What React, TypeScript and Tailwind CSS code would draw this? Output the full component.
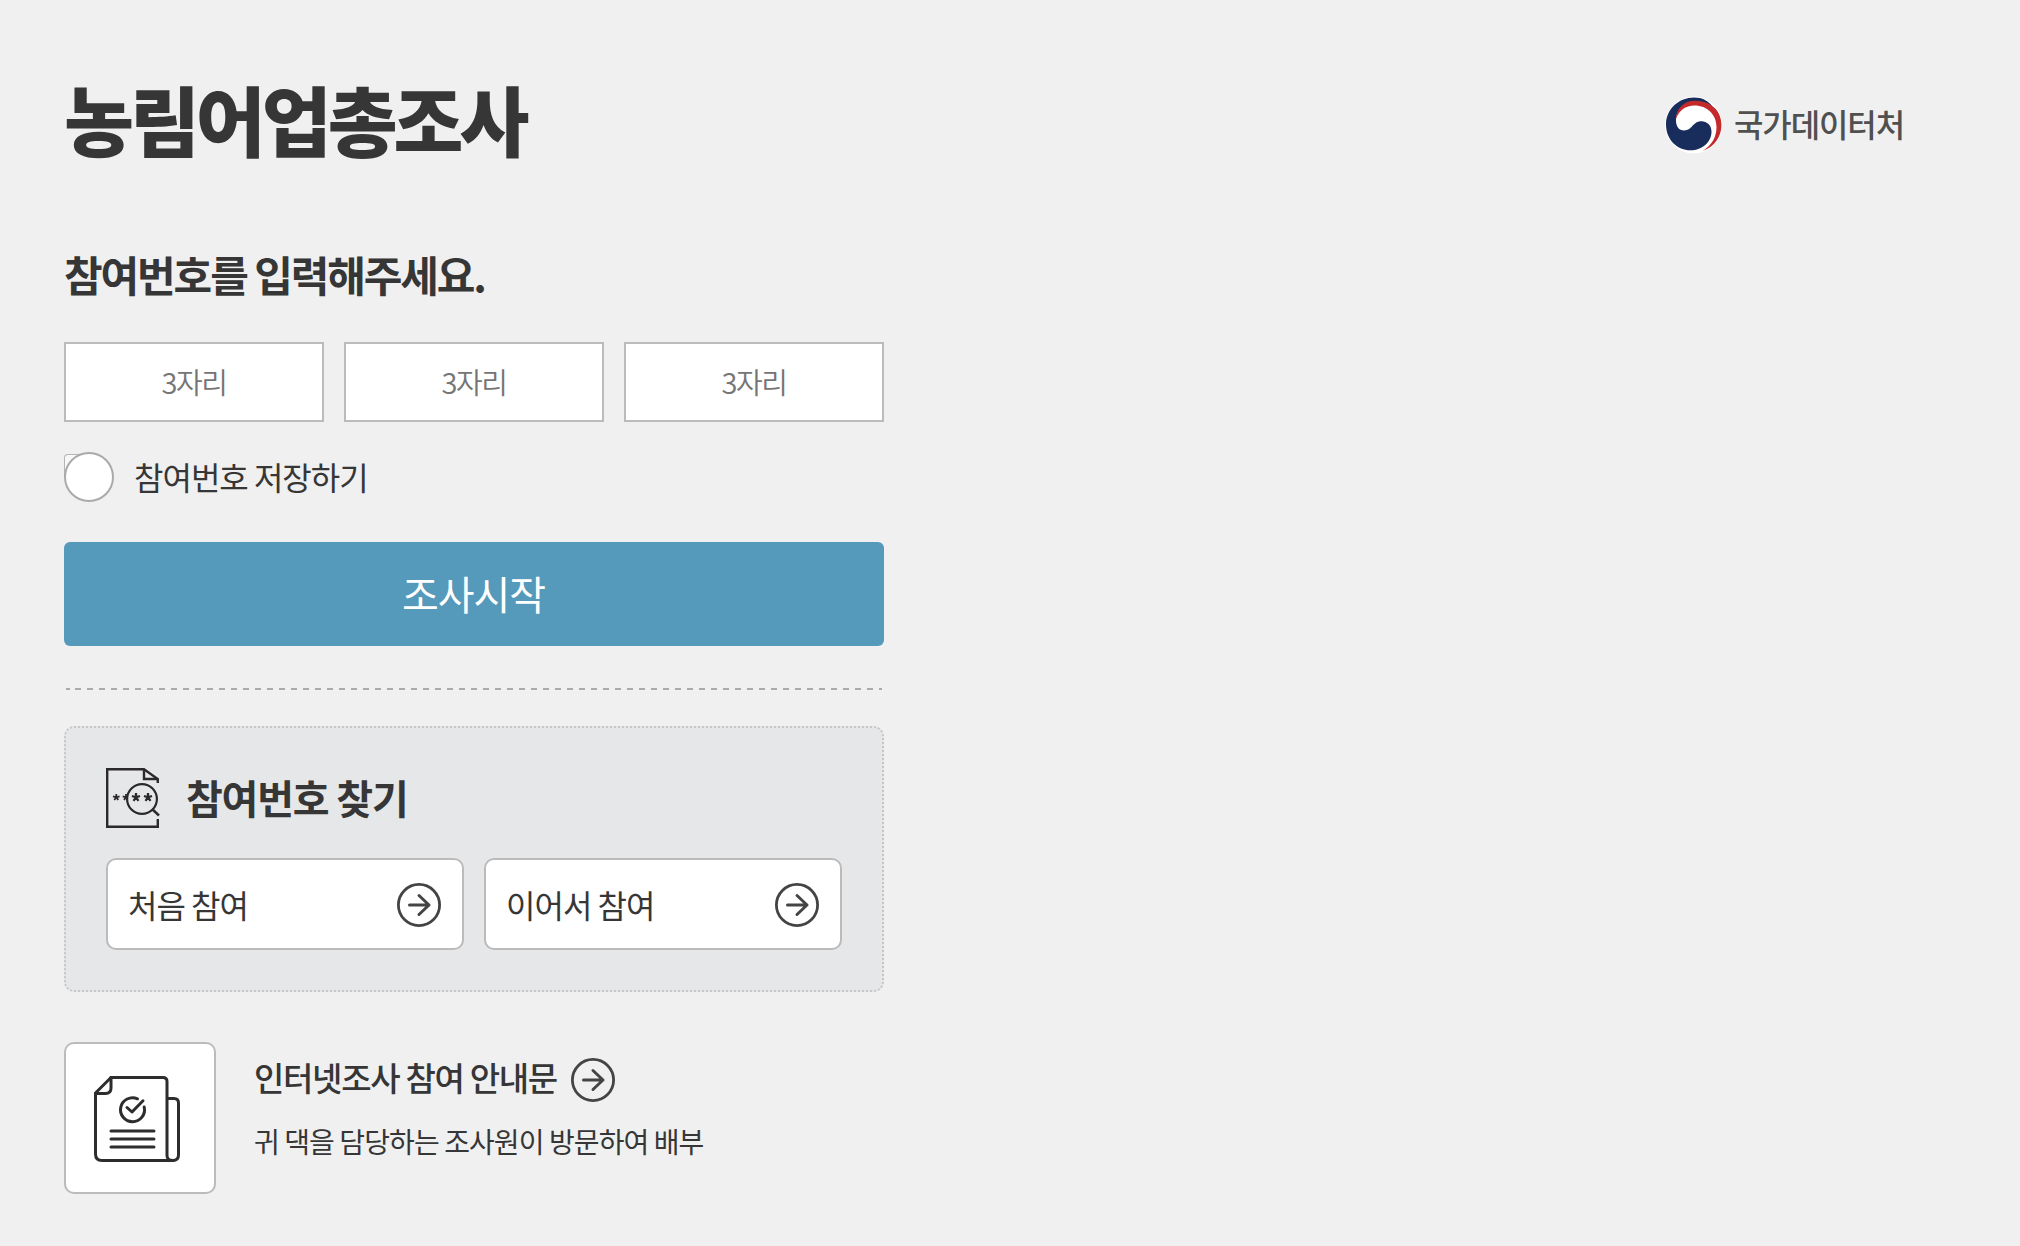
function ArrowCircle() {
  return (
    <svg className="h-11 w-11 shrink-0" viewBox="0 0 44 44" fill="none" stroke="#444444">
      <circle cx="22" cy="22" r="20.600" strokeWidth="2.800" />
      <path d="M12.500 22H32M22 12.500L32 22L22 31.500" strokeWidth="3" strokeLinecap="round" strokeLinejoin="round" />
    </svg>
  );
}

function GovernmentLogo() {
  return (
    <svg className="h-[58px] w-[58px] shrink-0" viewBox="0 0 58 58">
      <circle cx="28.500" cy="29" r="28.500" fill="#ffffff" />
      <path d="M35 2.100C18 -1.500 1 10.500 1 28.500C1 44 12.500 54.300 25.500 54.300C37.500 54.300 46.500 46 46.500 35.500C46.500 29.500 42 25.300 36.500 25.300C27 25.300 28 34.500 19 34.500C14 34.500 11 30.500 11 24.500C11 13 21 5.500 30 5.500C38 5.500 45 8 48 11C44.500 6.500 40 3.200 35 2.100Z" fill="#192d5c" />
      <path d="M29.500 4.800C19.500 4.800 11 12.500 11 23C14 14.500 20.500 9.500 29.500 9.500C42 9.500 51.500 18.500 51.500 31C51.500 41 47 49 38 54.800C49.500 50.500 56.400 41 56.400 29C56.400 21 53 14 47.500 10.300C43 7 37 4.800 29.500 4.800Z" fill="#c42a2b" />
    </svg>
  );
}

function SearchNumberIcon() {
  return (
    <svg className="h-[60px] w-[54px] shrink-0" viewBox="0 0 54 60" fill="none" stroke="#2b292a" strokeWidth="2.400">
      <path d="M51.800 15V11L38 1.200H1.200V58.800H51.800V51" />
      <path d="M38 1V11H52" />
      <circle cx="36" cy="31" r="14.900" strokeWidth="2.200" />
      <path d="M46 41L53 47.500" strokeWidth="2.400" />
      <path d="M10.300 26V29.300M7 28.300L10.300 29.300L13.600 28.300M10.300 29.300L8.300 32M10.300 29.300L12.300 32M20 26V29.300M16.700 28.300L20 29.300M20 29.300L18 32M20 29.300L21.500 31.500" strokeWidth="1.800" />
      <path d="M30 25V29.300M26 28L30 29.300L34 28M30 29.300L27.500 32.800M30 29.300L32.500 32.800M42 25V29.300M38 28L42 29.300L46 28M42 29.300L39.500 32.800M42 29.300L44.500 32.800" strokeWidth="2.300" />
    </svg>
  );
}

function GuideIcon() {
  return (
    <svg className="h-[86px] w-[86px]" viewBox="0 0 86 86" fill="none" stroke="#2d2d2d" strokeWidth="3" strokeLinecap="round" strokeLinejoin="round">
      <path d="M17 1.500H69Q73 1.500 73 5.500V79.500Q73 84.500 78.800 84.500Q84.500 84.500 84.500 79V27Q84.500 22.500 80 22.500H73" />
      <path d="M17 1.500L1.500 17V78Q1.500 84.500 8 84.500H79" />
      <path d="M17 1.500V12Q17 17.500 11.500 17.500H1.500" />
      <path d="M43.500 22.800A12 12 0 1 0 50.200 31" />
      <path d="M33 31.500L38 36L49 24.800M17 55H60M17 63H60M17 71H60" />
    </svg>
  );
}

const digitFields = ['first', 'second', 'third'];
const findLinks = ['처음 참여', '이어서 참여'];

export default function App() {
  return (
    <div className="min-h-[1246px] bg-[#f0f0f0] px-16 pt-[76px] font-['Noto_Sans_CJK_KR',sans-serif] text-[#363636]">
      <header className="flex h-24 items-center justify-between pr-[52px]">
        <h1 className="pb-3 text-[76px] leading-[96px] font-black tracking-[-4px] whitespace-nowrap">농림어업총조사</h1>
        <div className="flex items-center gap-[11px] pt-0.5">
          <GovernmentLogo />
          <span className="pb-1 text-[32px] leading-[48px] font-medium tracking-[-1.1px] whitespace-nowrap text-[#505050]">국가데이터처</span>
        </div>
      </header>

      <main className="w-[820px] pt-[70px]">
        <h2 className="h-16 text-[42px] leading-16 font-bold tracking-[-2.1px]">참여번호를 입력해주세요.</h2>
        <div className="mt-9 flex gap-5">
          {digitFields.map((name) => (
            <input
              key={name}
              name={name}
              type="text"
              maxLength={3}
              placeholder="3자리"
              className="h-20 w-[260px] border-2 border-[#bbbbbb] bg-white pb-0.5 text-center text-[29px] font-[350] tracking-[-1.4px] placeholder:text-[#757575]"
            />
          ))}
        </div>
        <label className="mt-[30px] flex h-[50px] items-center gap-5 text-[32px] leading-[48px] tracking-[-1px]">
          <span className="relative h-[50px] w-[50px]">
            <span className="absolute top-0.5 left-0 h-6 w-6 rounded-tl-sm border-t border-l border-[#b5b5b5] bg-[#f8f8f8]" />
            <span className="absolute inset-0 rounded-full border-2 border-[#aaaaaa] bg-white" />
          </span>
          <span className="pb-0.5">참여번호 저장하기</span>
        </label>
        <button className="mt-10 h-[104px] w-full rounded-md bg-[#5599bb] pr-px pb-[3px] text-[40px] tracking-[-1px] text-white">조사시작</button>
        <svg className="mt-[42px] block h-0.5 w-full" viewBox="0 0 820 2">
          <path d="M2 1H6M11 1H818" stroke="#aaaaaa" strokeWidth="2" strokeDasharray="6 6" />
        </svg>

        <section className="mt-9 h-[266px] rounded-[10px] border-2 border-dotted border-[#c6c6c6] bg-[#e6e7e9] px-10 pt-10">
          <h3 className="flex h-[60px] items-center gap-[26px] text-[40px] font-bold tracking-[-1.2px]">
            <SearchNumberIcon />
            <span className="pb-[3px]">참여번호 찾기</span>
          </h3>
          <div className="mt-[30px] flex gap-5">
            {findLinks.map((label) => (
              <button key={label} className="flex h-[92px] w-[358px] items-center justify-between rounded-[10px] border-2 border-[#bbbbbb] bg-white pt-px pr-[21px] pl-5 text-[32px] tracking-[-1px]">
                <span className="pb-0.5">{label}</span>
                <ArrowCircle />
              </button>
            ))}
          </div>
        </section>

        <section className="mt-[50px] flex gap-[38px]">
          <div className="h-[152px] w-[152px] shrink-0 rounded-[10px] border-2 border-[#bbbbbb] bg-white pt-8 pl-7">
            <GuideIcon />
          </div>
          <div className="pt-4">
            <div className="flex h-11 items-center gap-3.5 text-[33px] font-medium tracking-[-1.3px]">
              <span className="pb-[5px]">인터넷조사 참여 안내문</span>
              <ArrowCircle />
            </div>
            <p className="mt-[19px] text-[28px] leading-10 tracking-[-0.9px]">귀 댁을 담당하는 조사원이 방문하여 배부</p>
          </div>
        </section>
      </main>
    </div>
  );
}
